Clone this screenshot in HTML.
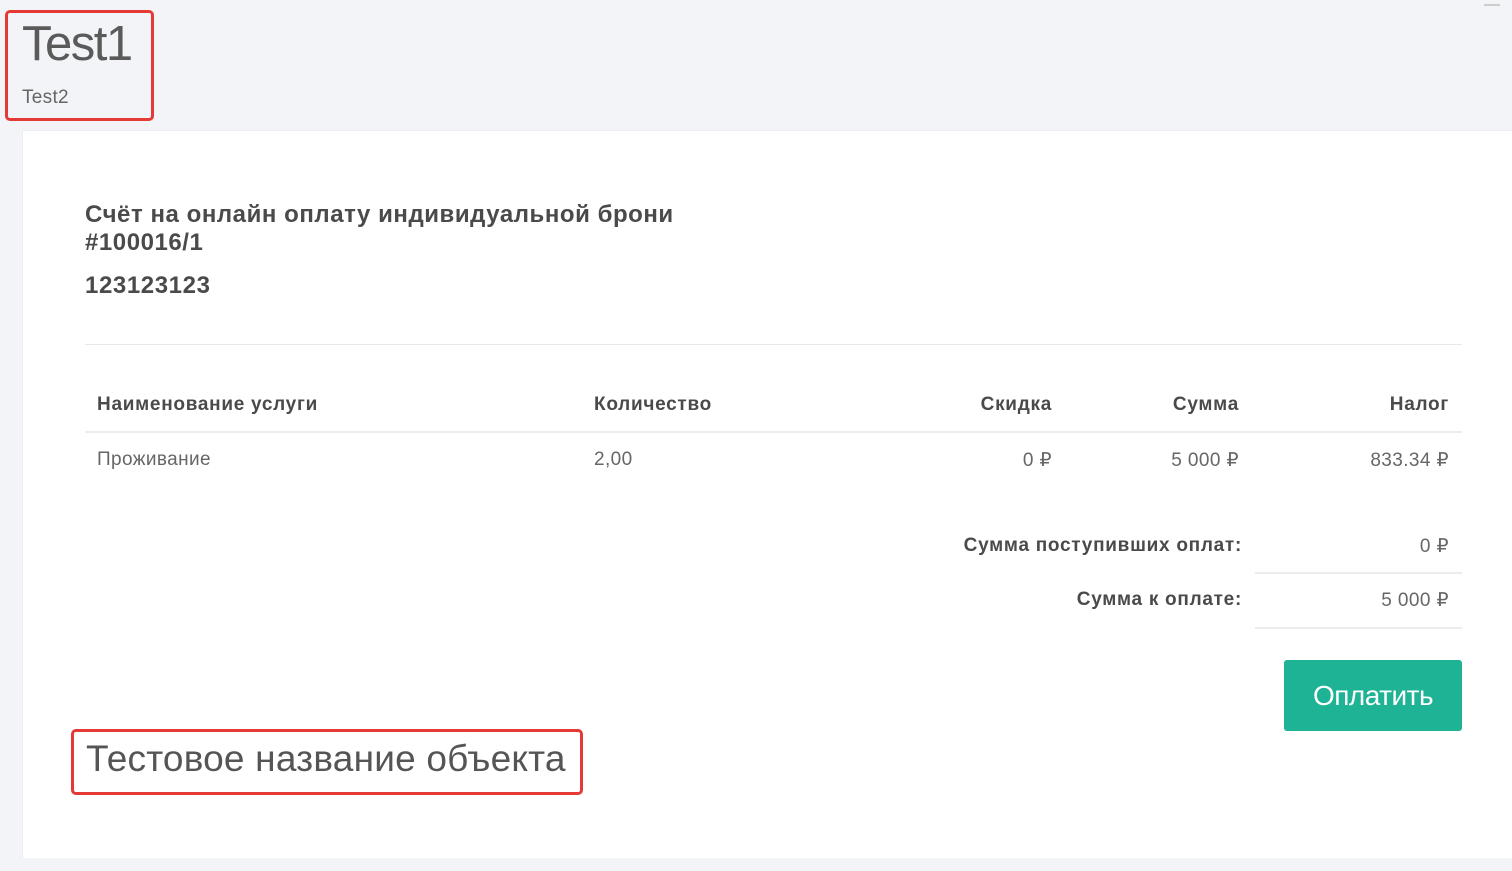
<!DOCTYPE html>
<html><head><meta charset="utf-8"><style>
*{margin:0;padding:0;box-sizing:border-box}
body{width:1512px;height:871px;background:#f3f4f8;font-family:"Liberation Sans",sans-serif;color:#555;position:relative;overflow:hidden}
.a{position:absolute;white-space:nowrap}
.card{position:absolute;left:22px;top:130px;width:1490px;height:728px;background:#fff;border-top:1px solid #eceef2;border-left:1px solid #eceef2}
.b{font-weight:bold;color:#4a4a4a}
.hr{position:absolute;height:2px;background:#ececec}
.red{position:absolute;border:3px solid #e53935;border-radius:5px}
.t{font-size:19px;letter-spacing:0.4px}
.t.b{letter-spacing:0.72px}
</style></head><body>
<div class="red" style="left:5px;top:10px;width:149px;height:111px"></div>
<div class="a" style="left:22px;top:16px;font-size:49px;color:#5a5a5a;letter-spacing:-1.5px">Test1</div>
<div class="a" style="left:22px;top:87px;font-size:19px;color:#666;letter-spacing:0.3px">Test2</div>
<div class="a" style="left:1484px;top:4px;width:16px;height:2px;background:#ccc"></div>
<div class="card"></div>
<div class="a b" style="left:85px;top:201px;font-size:24px;line-height:28px;letter-spacing:0.55px">Счёт на онлайн оплату индивидуальной брони<br>#100016/1</div>
<div class="a b" style="left:85px;top:272px;font-size:24px;letter-spacing:0.6px">123123123</div>
<div class="hr" style="left:85px;top:344px;width:1377px;height:1px;background:#e8e8e8"></div>
<div class="a b t" style="left:97px;top:394px">Наименование услуги</div>
<div class="a b t" style="left:594px;top:394px">Количество</div>
<div class="a b t" style="right:460px;top:394px">Скидка</div>
<div class="a b t" style="right:273px;top:394px">Сумма</div>
<div class="a b t" style="right:63px;top:394px">Налог</div>
<div class="hr" style="left:85px;top:431px;width:1377px"></div>
<div class="a t" style="left:97px;top:449px;color:#666">Проживание</div>
<div class="a t" style="left:594px;top:449px;color:#666">2,00</div>
<div class="a t" style="right:460px;top:449px;color:#666">0 ₽</div>
<div class="a t" style="right:273px;top:449px;color:#666">5 000 ₽</div>
<div class="a t" style="right:63px;top:449px;color:#666">833.34 ₽</div>
<div class="a b t" style="right:270px;top:535px">Сумма поступивших оплат:</div>
<div class="a t" style="right:63px;top:535px;color:#666">0 ₽</div>
<div class="hr" style="left:1255px;top:572px;width:207px"></div>
<div class="a b t" style="right:270px;top:589px">Сумма к оплате:</div>
<div class="a t" style="right:63px;top:589px;color:#666">5 000 ₽</div>
<div class="hr" style="left:1255px;top:627px;width:207px"></div>
<div class="a" style="left:1284px;top:660px;width:178px;height:71px;background:#1db394;border-radius:3px;color:#fff;font-size:28px;line-height:71px;text-align:center;letter-spacing:-0.5px">Оплатить</div>
<div class="red" style="left:71px;top:729px;width:512px;height:66px"></div>
<div class="a" style="left:86px;top:738px;font-size:37px;color:#555;letter-spacing:0.2px">Тестовое название объекта</div>
</body></html>
